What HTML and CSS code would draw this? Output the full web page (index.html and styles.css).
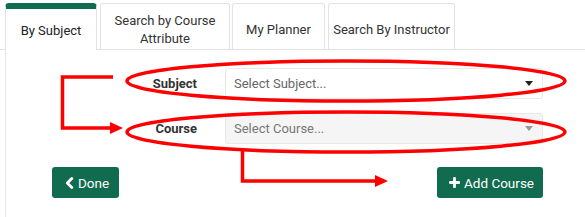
FILE: index.html
```
<!DOCTYPE html>
<html>
<head>
<meta charset="utf-8">
<link rel="stylesheet" href="styles.css">
</head>
<body>
<div class="page">
  <ul class="tabs">
    <li class="tab tab-active tab-subject">By Subject</li>
    <li class="tab tab-attr">Search by Course<br>Attribute</li>
    <li class="tab tab-planner">My Planner</li>
    <li class="tab tab-instr">Search By Instructor</li>
  </ul>
  <div class="panel">
    <div class="row">
      <label class="label">Subject</label>
      <div class="select">
        <span class="placeholder">Select Subject...</span>
        <span class="caret"></span>
      </div>
    </div>
    <div class="row">
      <label class="label">Course</label>
      <div class="select select-disabled">
        <span class="placeholder">Select Course...</span>
        <span class="caret caret-disabled"></span>
      </div>
    </div>
    <div class="actions">
      <button class="btn btn-done">
        <svg class="icon" width="9" height="12" viewBox="0 0 9 12"><path d="M6.8 1.5 L2.3 6 L6.8 10.5" fill="none" stroke="#fff" stroke-width="2.8" stroke-linecap="round" stroke-linejoin="round"/></svg>
        <span>Done</span>
      </button>
      <button class="btn btn-add">
        <svg class="icon" width="11" height="11" viewBox="0 0 11 11"><path d="M5.5 1.2 V9.8 M1.2 5.5 H9.8" fill="none" stroke="#fff" stroke-width="2.8" stroke-linecap="round"/></svg>
        <span>Add Course</span>
      </button>
    </div>
  </div>
  <svg class="annot" width="585" height="217" viewBox="0 0 585 217">
    <g fill="none" stroke="#ff0000" stroke-width="3.5">
      <ellipse cx="346" cy="81" rx="219" ry="20"/>
      <ellipse cx="346" cy="132" rx="219" ry="20"/>
      <polyline points="113,77 62.5,77 62.5,128 112,128"/>
      <polyline points="242.5,151 242.5,181 376,181"/>
    </g>
    <g fill="#ff0000">
      <polygon points="110,122 123,128 110,134"/>
      <polygon points="375,175 388,181 375,187"/>
    </g>
  </svg>
</div>
</body>
</html>
```
FILE: styles.css
```
* { box-sizing: border-box; }
body {
  margin: 0;
  background: #fff;
  font-family: Roboto, "Liberation Sans", Arial, sans-serif;
  font-size: 13px;
  color: #333;
}
.page {
  position: relative;
  width: 585px;
  height: 217px;
  overflow: hidden;
  padding-top: 3px;
}
.tabs {
  list-style: none;
  margin: 0;
  padding: 0 0 0 5px;
  display: flex;
  align-items: stretch;
  height: 47px;
  border-bottom: 1px solid #e3e3e3;
}
.tab {
  display: flex;
  align-items: center;
  justify-content: center;
  text-align: center;
  line-height: 18px;
  white-space: nowrap;
  border: 1px solid #e3e3e3;
  border-bottom: none;
  border-radius: 3px 3px 0 0;
  color: #333;
  background: #fff;
  padding-top: 7px;
}
.tab-active {
  border-top: 6px solid #116b4f;
  border-radius: 4px 4px 0 0;
  margin-bottom: -1px;
  width: 92px;
  color: #222;
  padding-top: 2px;
}
.tab-attr { width: 130px; margin-left: 3px; }
.tab-planner { width: 93px; margin-left: 2px; }
.tab-instr { width: 127px; margin-left: 3px; }
.panel {
  margin-left: 5px;
  border-left: 1px solid #e6e6e6;
  height: 170px;
  padding-top: 18px;
}
.row {
  display: flex;
  align-items: center;
  height: 30px;
  margin-bottom: 15px;
}
.label {
  width: 191px;
  text-align: right;
  font-weight: bold;
  color: #333;
  margin-right: 28px;
}
.select {
  width: 318px;
  height: 31px;
  border: 1px solid #e8e8e8;
  border-radius: 3px;
  background: #fff;
  display: flex;
  align-items: center;
  justify-content: space-between;
  padding: 0 9px 0 8px;
}
.select-disabled { background: #f5f5f5; }
.placeholder { color: #666; }
.select-disabled .placeholder { color: #777; }
.caret {
  width: 0;
  height: 0;
  border-left: 4px solid transparent;
  border-right: 4px solid transparent;
  border-top: 5px solid #222;
}
.caret-disabled { border-top-color: #999; }
.actions {
  display: flex;
  justify-content: space-between;
  width: 537px;
  padding-left: 46px;
  margin-top: 24px;
}
.btn {
  height: 31px;
  border: none;
  border-radius: 3px;
  background: #116b4f;
  color: #fff;
  font-family: Roboto, "Liberation Sans", Arial, sans-serif;
  font-size: 13.5px;
  white-space: nowrap;
  display: flex;
  align-items: center;
  gap: 4px;
  padding: 0 12px;
}
.btn-done { width: 67px; padding-left: 13px; }
.btn-add { width: 106px; padding-left: 12px; }
.icon { display: block; flex: none; }
.annot {
  position: absolute;
  left: 0;
  top: 0;
  pointer-events: none;
}
```
